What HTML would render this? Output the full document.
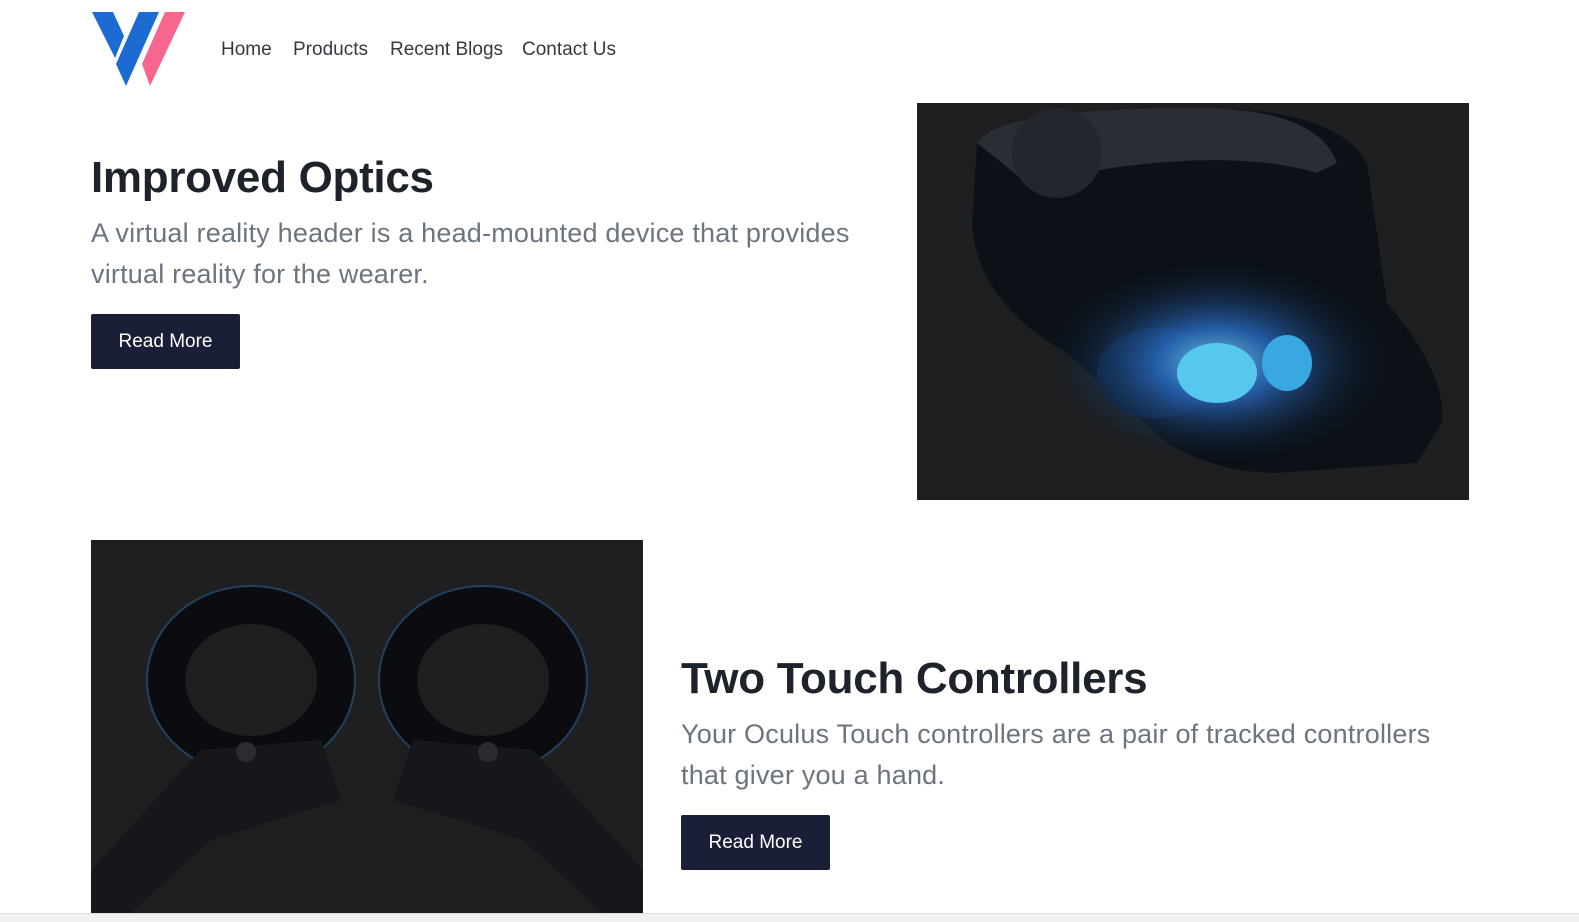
<!DOCTYPE html>
<html><head><meta charset="utf-8"><style>
body{margin:0;width:1579px;height:921px;background:#fff;font-family:"Liberation Sans",sans-serif;position:relative;overflow:hidden}
.nav a{position:absolute;top:39px;font-size:19px;color:#343a40;text-decoration:none}
h2{position:absolute;margin:0;font-size:44px;font-weight:bold;color:#1d222b;letter-spacing:-0.3px}
p{position:absolute;margin:0;font-size:27px;line-height:41px;color:#6c757d;letter-spacing:0.2px}
.btn{position:absolute;width:149px;height:55px;background:#1a1e36;color:#fff;font-size:19px;line-height:55px;text-align:center;border-radius:2px}
.img{position:absolute;background:#1e1f21;overflow:hidden}
</style></head><body>
<svg style="position:absolute;left:0;top:0" width="200" height="100">
<polygon points="92,12 113,12 124,36 115,58" fill="#1b6bd3"/>
<polygon points="139,12 159,12 126,86 116,64" fill="#1b6bd3"/>
<polygon points="165,12 185,12 150,86 142,64" fill="#f7668f"/>
</svg>
<div class="nav"><a style="left:221px">Home</a><a style="left:293px">Products</a><a style="left:390px">Recent Blogs</a><a style="left:522px">Contact Us</a></div>
<h2 style="left:91px;top:153px">Improved Optics</h2>
<p style="left:91px;top:213px;width:800px">A virtual reality header is a head-mounted device that provides virtual reality for the wearer.</p>
<div class="btn" style="left:91px;top:314px">Read More</div>
<div class="img" style="left:917px;top:103px;width:552px;height:397px">
<svg width="552" height="397">
<defs><radialGradient id="g1" cx="0.5" cy="0.5" r="0.5"><stop offset="0" stop-color="#7fe0ff"/><stop offset="0.35" stop-color="#2a6fc8"/><stop offset="1" stop-color="#0e1a2a" stop-opacity="0"/></radialGradient></defs>
<path d="M60,40 Q80,5 280,5 Q420,5 450,60 L470,200 Q530,270 525,320 L500,360 L360,370 Q300,370 250,340 L150,250 Q60,200 55,120 Z" fill="#0c1118"/>
<ellipse cx="240" cy="270" rx="60" ry="45" fill="#0f2036"/>
<ellipse cx="300" cy="260" rx="170" ry="100" fill="url(#g1)" opacity="0.8"/>
<ellipse cx="300" cy="270" rx="40" ry="30" fill="#56c8ef"/>
<ellipse cx="370" cy="260" rx="25" ry="28" fill="#3aa8e0"/>
<path d="M60,40 Q80,5 280,5 Q400,5 420,60 L400,70 Q300,40 110,80 Z" fill="#2a2d33"/>
<ellipse cx="140" cy="50" rx="45" ry="45" fill="#23262c"/>
</svg></div>
<div class="img" style="left:91px;top:540px;width:552px;height:373px">
<svg width="552" height="373">
<g fill="none" stroke-width="38">
<ellipse cx="160" cy="140" rx="85" ry="75" stroke="#0b0c0f"/>
<ellipse cx="392" cy="140" rx="85" ry="75" stroke="#0b0c0f"/>
</g>
<g fill="none" stroke="#2d5d8a" stroke-width="2" opacity="0.6">
<ellipse cx="160" cy="140" rx="104" ry="94"/><ellipse cx="392" cy="140" rx="104" ry="94"/></g>
<path d="M110,210 L230,200 L250,260 L120,300 L40,373 L0,373 L0,330 Z" fill="#15171b"/>
<path d="M442,210 L322,200 L302,260 L432,300 L512,373 L552,373 L552,330 Z" fill="#15171b"/>
<circle cx="155" cy="212" r="10" fill="#2a2c30"/><circle cx="397" cy="212" r="10" fill="#2a2c30"/>
</svg></div>
<h2 style="left:681px;top:654px">Two Touch Controllers</h2>
<p style="left:681px;top:714px;width:760px">Your Oculus Touch controllers are a pair of tracked controllers that giver you a hand.</p>
<div class="btn" style="left:681px;top:815px">Read More</div>
<div style="position:absolute;left:0;top:913px;width:1579px;height:8px;background:#f1f1f1;border-top:1px solid #ddd"></div>
</body></html>
